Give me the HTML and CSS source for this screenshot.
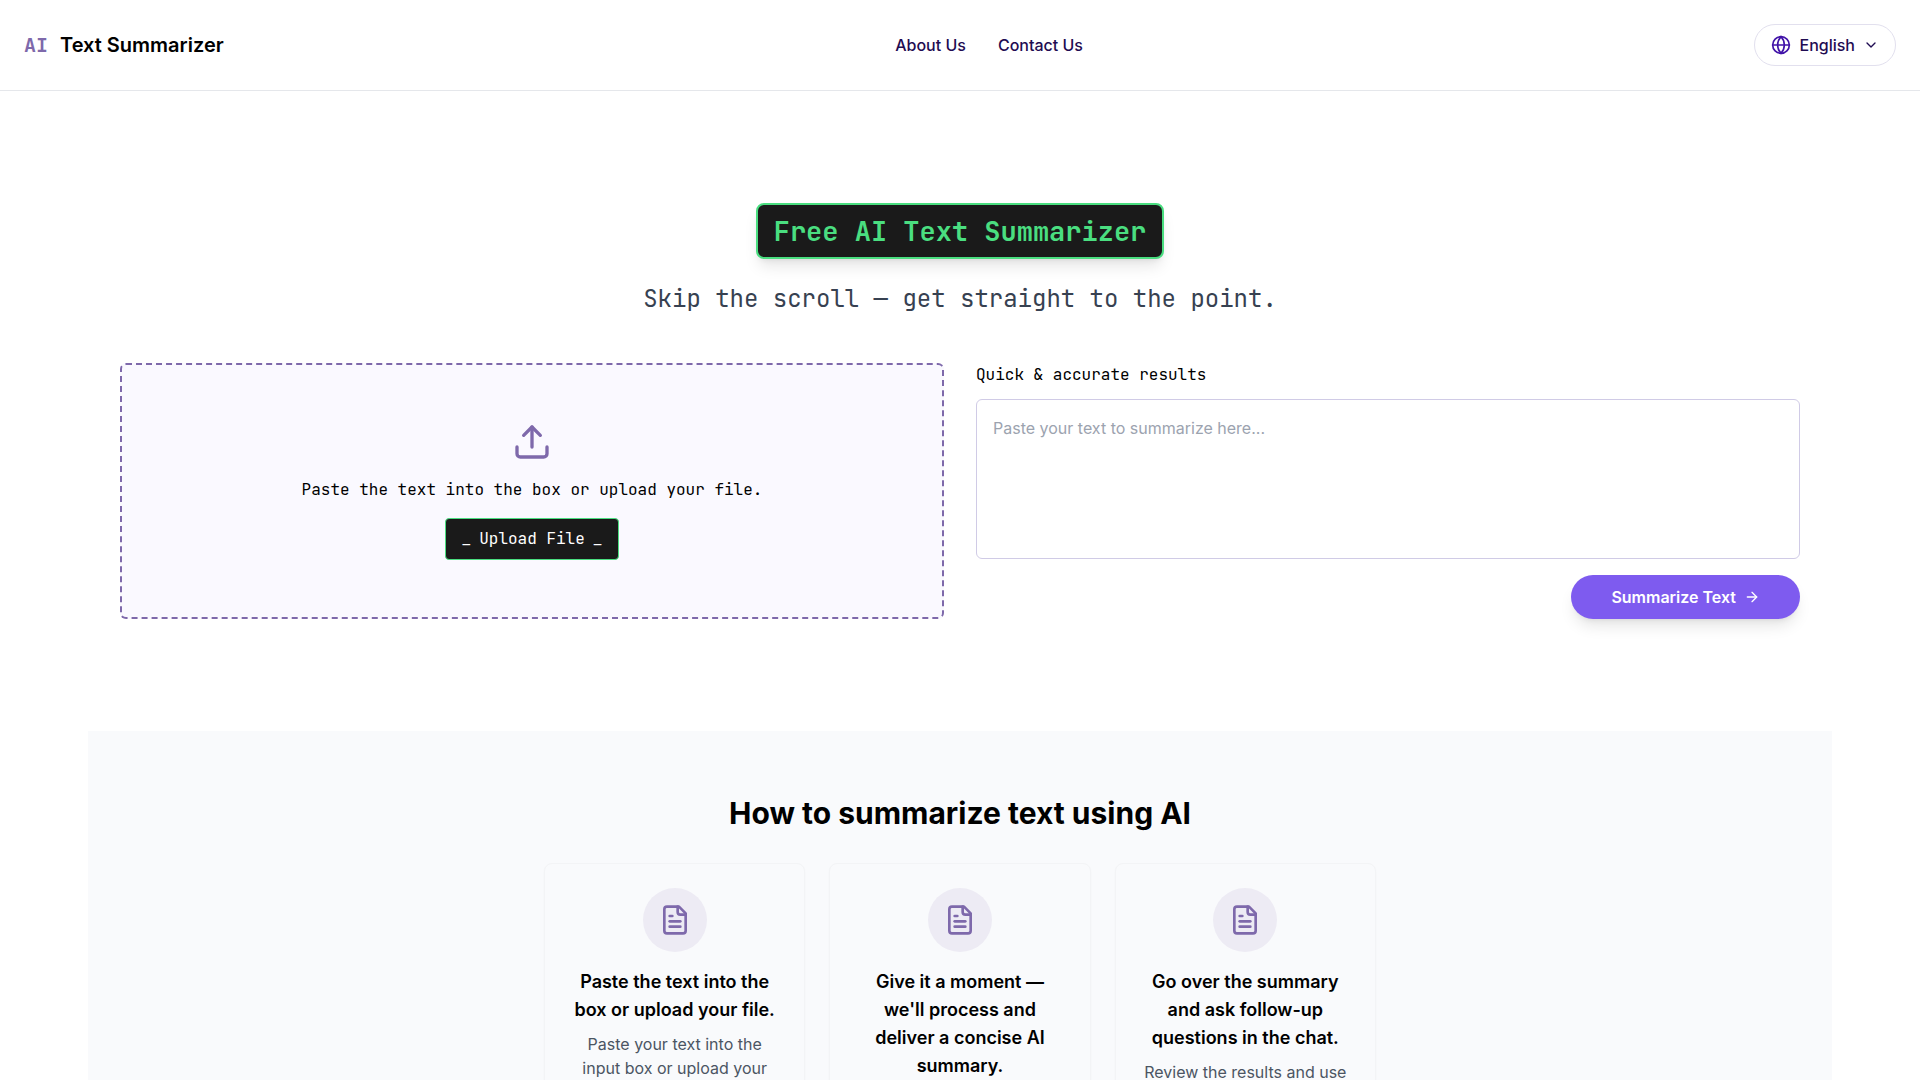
FILE: index.html
```html
<!DOCTYPE html>
<html lang="en">
<head>
  <meta charset="utf-8">
  <meta name="viewport" content="width=device-width, initial-scale=1">
  <title>Free AI Text Summarizer</title>
  <link rel="stylesheet" href="styles.css">
</head>
<body>
  <svg width="0" height="0" class="sprite" aria-hidden="true">
    <symbol id="file-text" viewBox="0 0 24 24">
      <path d="M15 2H6a2 2 0 0 0-2 2v16a2 2 0 0 0 2 2h12a2 2 0 0 0 2-2V7Z"/>
      <path d="M14 2v4a2 2 0 0 0 2 2h4"/>
      <path d="M10 9H8"/>
      <path d="M16 13H8"/>
      <path d="M16 17H8"/>
    </symbol>
  </svg>

  <header class="header">
    <a class="brand" href="#"><span class="brand-mark">AI</span><span>Text Summarizer</span></a>
    <nav class="nav">
      <a href="#about">About Us</a>
      <a href="#contact">Contact Us</a>
    </nav>
    <button class="language" type="button">
      <svg class="icon icon-globe" viewBox="0 0 24 24" aria-hidden="true"><circle cx="12" cy="12" r="10"/><path d="M12 2a14.5 14.5 0 0 0 0 20 14.5 14.5 0 0 0 0-20"/><path d="M2 12h20"/></svg>
      <span>English</span>
      <svg class="icon icon-small" viewBox="0 0 24 24" aria-hidden="true"><path d="m6 9 6 6 6-6"/></svg>
    </button>
  </header>

  <main class="main">
    <section class="hero">
      <h1 class="hero-title">Free AI Text Summarizer</h1>
      <p class="hero-subtitle">Skip the scroll — get straight to the point.</p>
      <div class="workspace">
        <div class="upload">
          <svg class="icon icon-upload" viewBox="0 0 24 24" aria-hidden="true"><path d="M21 15v4a2 2 0 0 1-2 2H5a2 2 0 0 1-2-2v-4"/><path d="m17 8-5-5-5 5"/><path d="M12 3v12"/></svg>
          <p>Paste the text into the box or upload your file.</p>
          <button class="upload-button" type="button"><span>_</span><span>Upload File</span><span>_</span></button>
        </div>
        <form class="editor">
          <label class="editor-label" for="source-text">Quick &amp; accurate results</label>
          <textarea class="editor-input" id="source-text" placeholder="Paste your text to summarize here..."></textarea>
          <button class="submit" type="button">
            <span>Summarize Text</span>
            <svg class="icon icon-small" viewBox="0 0 24 24" aria-hidden="true"><path d="M5 12h14"/><path d="m12 5 7 7-7 7"/></svg>
          </button>
        </form>
      </div>
    </section>

    <section class="steps">
      <h2 class="steps-title">How to summarize text using AI</h2>
      <div class="steps-grid">
        <article class="card">
          <div class="card-badge"><svg class="icon icon-file" aria-hidden="true"><use href="#file-text"/></svg></div>
          <h3>Paste the text into the box or upload your file.</h3>
          <p>Paste your text into the input box or upload your file.</p>
        </article>
        <article class="card">
          <div class="card-badge"><svg class="icon icon-file" aria-hidden="true"><use href="#file-text"/></svg></div>
          <h3>Give it a moment — we'll process and deliver a concise AI summary.</h3>
        </article>
        <article class="card">
          <div class="card-badge"><svg class="icon icon-file" aria-hidden="true"><use href="#file-text"/></svg></div>
          <h3>Go over the summary and ask follow-up questions in the chat.</h3>
          <p>Review the results and use the chat.</p>
        </article>
      </div>
    </section>
  </main>
</body>
</html>
```
FILE: styles.css
```css
:root {
  --purple: #7e69ab;
  --green: #4ade80;
  --terminal: #1a1a1a;
  --ink: #1f0c52;
  --sans: Inter, "Liberation Sans", sans-serif;
  --mono: "JetBrains Mono", "DejaVu Sans Mono", "Liberation Mono", monospace;
}

*,
*::before,
*::after {
  box-sizing: border-box;
}

body {
  margin: 0;
  background: #fff;
  color: #000;
  font: 400 16px/24px var(--sans);
}

h1, h2, h3, p {
  margin: 0;
}

a {
  color: inherit;
  text-decoration: none;
}

button {
  font: inherit;
  cursor: pointer;
}

.sprite {
  position: absolute;
}

.icon {
  flex: none;
  fill: none;
  stroke: currentColor;
  stroke-width: 2;
  stroke-linecap: round;
  stroke-linejoin: round;
}

.icon-small { width: 16px; height: 16px; }
.icon-globe { width: 20px; height: 20px; color: #4012a8; }
.icon-file { width: 32px; height: 32px; }
.icon-upload { width: 40px; height: 40px; color: var(--purple); }

/* Header */
.header {
  display: flex;
  align-items: center;
  justify-content: space-between;
  padding: 24px;
  border-bottom: 1px solid #e5e7eb;
}

.brand {
  display: flex;
  align-items: center;
  gap: 12px;
  font-size: 20px;
  line-height: 28px;
  font-weight: 600;
}

.brand-mark {
  color: var(--purple);
  font-family: var(--mono);
}

.nav {
  display: flex;
  gap: 32px;
  color: var(--ink);
  font-weight: 500;
}

.language {
  display: flex;
  align-items: center;
  gap: 8px;
  padding: 8px 16px;
  border: 1px solid #e2e0ee;
  border-radius: 24px;
  background: #fff;
  color: var(--ink);
  font-weight: 500;
}

/* Hero */
.main {
  max-width: 1744px;
  margin: 0 auto;
}

.hero {
  display: flex;
  flex-direction: column;
  align-items: center;
  padding: 112px 32px;
}

.hero-title {
  padding: 8px 16px;
  border: 2px solid var(--green);
  border-radius: 8px;
  background: var(--terminal);
  box-shadow: 0 10px 15px -3px rgba(0, 0, 0, 0.1), 0 4px 6px -4px rgba(0, 0, 0, 0.1);
  color: var(--green);
  font: 600 27px/36px var(--mono);
}

.hero-subtitle {
  margin: 24px 0 48px;
  color: #374151;
  font: 400 24px/32px var(--mono);
}

.workspace {
  display: grid;
  grid-template-columns: 1fr 1fr;
  gap: 32px;
  width: 100%;
}

.upload {
  display: flex;
  flex-direction: column;
  align-items: center;
  justify-content: center;
  gap: 16px;
  padding: 32px;
  border: 2px dashed var(--purple);
  border-radius: 6px;
  background: #faf9ff;
  font-family: var(--mono);
}

.upload-button {
  display: flex;
  gap: 8px;
  padding: 8px 16px;
  border: 1px solid var(--green);
  border-radius: 4px;
  background: var(--terminal);
  color: #fff;
}

.editor {
  display: flex;
  flex-direction: column;
}

.editor-label {
  margin-bottom: 12px;
  font-family: var(--mono);
}

.editor-input {
  height: 160px;
  padding: 16px;
  border: 1px solid #d0cbe6;
  border-radius: 6px;
  outline: none;
  background: #fff;
  color: #000;
  font: inherit;
  resize: none;
}

.editor-input::placeholder {
  color: #9ca3af;
}

.submit {
  display: flex;
  align-items: center;
  align-self: flex-end;
  gap: 8px;
  margin-top: 16px;
  padding: 10px 40px;
  border: 0;
  border-radius: 24px;
  background: #7e5bef;
  box-shadow: 0 10px 15px -3px rgba(0, 0, 0, 0.1), 0 4px 6px -4px rgba(0, 0, 0, 0.1);
  color: #fff;
  font-weight: 600;
}

/* Steps */
.steps {
  padding: 64px 32px;
  background: #f9fafc;
}

.steps-title {
  margin-bottom: 32px;
  font-size: 30px;
  line-height: 36px;
  font-weight: 700;
  text-align: center;
}

.steps-grid {
  display: grid;
  grid-template-columns: repeat(3, 1fr);
  gap: 24px;
  max-width: 832px;
  margin: 0 auto;
}

.card {
  display: flex;
  flex-direction: column;
  align-items: center;
  padding: 24px;
  border: 1px solid #f3f4f6;
  border-radius: 8px;
  box-shadow: 0 1px 2px rgba(0, 0, 0, 0.03);
  text-align: center;
}

.card-badge {
  display: grid;
  place-items: center;
  width: 64px;
  height: 64px;
  margin-bottom: 16px;
  border-radius: 50%;
  background: #edebf4;
  color: var(--purple);
}

.card h3 {
  margin-bottom: 8px;
  font-size: 18px;
  line-height: 28px;
  font-weight: 600;
}

.card p {
  color: #4b5563;
}

@media (max-width: 900px) {
  .workspace,
  .steps-grid {
    grid-template-columns: 1fr;
  }
}
```
